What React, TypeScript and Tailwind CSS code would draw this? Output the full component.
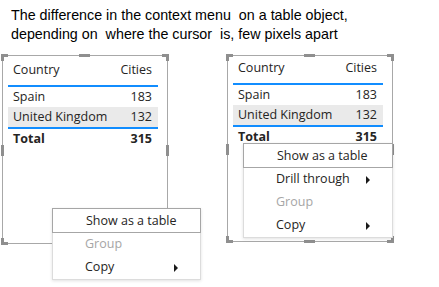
import React from "react";

type MenuItem = { label: string; disabled?: boolean; sub?: boolean };

const rows = [
  { country: "Spain", cities: 183 },
  { country: "United Kingdom", cities: 132 },
];

const ui = { fontFamily: '"Open Sans", "Noto Sans", sans-serif' };

// selection handles drawn on top of the visual's border
function Handles({ h }: { h: number }) {
  const w = 166;
  const c = "#8f8f8f";
  const mid = Math.round(h / 2) - 5;
  return (
    <svg className="absolute inset-0 overflow-visible pointer-events-none" width={w} height={h}>
      <g fill={c}>
        <rect x={-1} y={-1} width={7} height={3} />
        <rect x={-1} y={-1} width={3} height={7} />
        <rect x={w - 6} y={-1} width={7} height={3} />
        <rect x={w - 2} y={-1} width={3} height={7} />
        <rect x={-1} y={h - 2} width={7} height={3} />
        <rect x={-1} y={h - 6} width={3} height={7} />
        <rect x={w - 6} y={h - 2} width={7} height={3} />
        <rect x={w - 2} y={h - 6} width={3} height={7} />
        <rect x={77} y={-1} width={11} height={3} />
        <rect x={77} y={h - 2} width={11} height={3} />
        <rect x={-1} y={mid} width={3} height={11} />
        <rect x={w - 2} y={mid} width={3} height={11} />
      </g>
    </svg>
  );
}

function ContextMenu({ items, className }: { items: MenuItem[]; className: string }) {
  return (
    <div
      className={`absolute bg-white border border-[#dcdcdc] shadow-[0_1px_3px_rgba(0,0,0,0.12)] text-[12.5px] text-[#252423] ${className}`}
      style={ui}
    >
      <div className="-mx-[1px] -mt-[1px] h-[25px] border border-[#a6a6a6] pl-[33px] leading-[23px]">
        Show as a table
      </div>
      {items.map((item) => (
        <div
          key={item.label}
          className={`flex items-center justify-between h-[23px] pl-[32px] pr-[22px] ${item.disabled ? "text-[#a6a6a6]" : ""}`}
        >
          <span>{item.label}</span>
          {item.sub && (
            <span className="w-0 h-0 border-y-[4px] border-y-transparent border-l-[4px] border-l-[#1a1a1a]" />
          )}
        </div>
      ))}
    </div>
  );
}

function TableVisual({
  h,
  lift,
  menu,
}: {
  h: number;
  lift: boolean;
  menu: React.ReactNode;
}) {
  return (
    <div className="relative w-[166px]" style={{ height: h }}>
      <div className="w-full h-full border border-[#a8a8a8]">
        <div className={`pl-[5px] w-[155px] text-[12.5px] text-[#252423] ${lift ? "pt-[2px]" : "pt-[4px]"}`} style={ui}>
          <div className="flex justify-between h-[25px] leading-[20px] pl-[5px] pr-[6px]">
            <span>Country</span>
            <span>Cities</span>
          </div>
          <div className="h-[2px] bg-[#118dff]" />
          {rows.map((r, i) => (
            <div
              key={r.country}
              className={`flex justify-between h-[20px] leading-[20px] pl-[5px] pr-[6px] ${i === 1 ? "bg-[#eaeaea]" : ""}`}
            >
              <span>{r.country}</span>
              <span>{r.cities}</span>
            </div>
          ))}
          <div className="h-[2px] bg-[#118dff]" />
          <div className="flex justify-between h-[20px] leading-[20px] pl-[5px] pr-[6px] font-bold">
            <span>Total</span>
            <span>315</span>
          </div>
        </div>
      </div>
      <Handles h={h} />
      {menu}
    </div>
  );
}

export default function App() {
  return (
    <div className="w-[439px] h-[287px] bg-white overflow-hidden">
      <p
        className="pl-[11px] pt-[6px] text-[14.3px] leading-[19px] text-black"
        style={{ fontFamily: '"Liberation Sans", Arial, sans-serif' }}
      >
        The difference in the context menu&nbsp; on a table object,
        <br />
        depending on&nbsp; where the cursor&nbsp; is, few pixels apart
      </p>
      <div className="flex mt-[11px] pl-[2px] gap-[59px] items-start">
        <TableVisual
          h={189}
          lift={false}
          menu={
            <ContextMenu
              className="left-[50px] top-[153px] w-[149px]"
              items={[
                { label: "Group", disabled: true },
                { label: "Copy", sub: true },
              ]}
            />
          }
        />
        <TableVisual
          h={187}
          lift={true}
          menu={
            <ContextMenu
              className="left-[16px] top-[88px] w-[150px]"
              items={[
                { label: "Drill through", sub: true },
                { label: "Group", disabled: true },
                { label: "Copy", sub: true },
              ]}
            />
          }
        />
      </div>
    </div>
  );
}
